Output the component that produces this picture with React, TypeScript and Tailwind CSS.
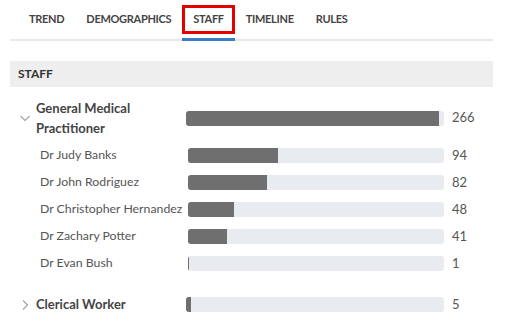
import React from 'react';

const TABS = ['TREND', 'DEMOGRAPHICS', 'STAFF', 'TIMELINE', 'RULES'];

interface Staff {
  name: string;
  count: number;
}

const GMP: Staff[] = [
  { name: 'Dr Judy Banks', count: 94 },
  { name: 'Dr John Rodriguez', count: 82 },
  { name: 'Dr Christopher Hernandez', count: 48 },
  { name: 'Dr Zachary Potter', count: 41 },
  { name: 'Dr Evan Bush', count: 1 },
];

const MAX = 266;

const Bar = ({ value, max, pct }: { value: number; max: number; pct?: number }) => (
  <div className="h-[15px] flex-1 overflow-hidden rounded-[3px] bg-[#e8ebef]">
    <div
      className="h-full bg-[#6f6f6f]"
      style={{ width: `${pct ?? Math.max((value / max) * 100, 0.5)}%` }}
    />
  </div>
);

const Chevron = ({ open }: { open?: boolean }) => (
  <svg width="12" height="12" viewBox="0 0 12 12" className="shrink-0">
    {open ? (
      <path d="M1.5 4 L6 8.5 L10.5 4" fill="none" stroke="#a3a3a3" strokeWidth="1.2" />
    ) : (
      <path d="M4 1.5 L8.5 6 L4 10.5" fill="none" stroke="#a3a3a3" strokeWidth="1.2" />
    )}
  </svg>
);

export default function App() {
  return (
    <div className="h-[328px] w-[506px] bg-white pl-[10px] pr-[13px] font-['Lato','Liberation_Sans',sans-serif] text-[13px]">
      {/* Tabs */}
      <div className="flex h-[41px] border-b-2 border-[#e6e9ed] pl-[8px]">
        {TABS.map(t => (
          <div key={t} className="relative flex items-center px-[11px]">
            <span
              className={`text-[11px] font-bold tracking-[-0.3px] text-[#444] ${
                t === 'STAFF' ? '-mx-[8px] px-[8px] py-[3px] outline-[3px] outline-solid outline-[#e50000]' : ''
              }`}
            >
              {t}
            </span>
            {t === 'STAFF' && <div className="absolute -bottom-[2px] left-0 right-0 h-[3px] bg-[#3b7bc0]" />}
          </div>
        ))}
      </div>

      {/* Section */}
      <div className="mt-[20px] flex h-[26px] items-center bg-[#eeeeee] px-[8px] text-[12px] font-bold text-[#333]">
        STAFF
      </div>

      <div className="pt-[11px]">
        <div className="flex items-center">
          <div className="flex w-[176px] items-center gap-[5px] pl-[9px]">
            <Chevron open />
            <div className="w-[132px] font-bold leading-[20px] text-[#444]">General Medical Practitioner</div>
          </div>
          <Bar value={266} max={MAX} pct={98} />
          <div className="w-[49px] pl-[8px] text-[#555]">266</div>
        </div>

        <div className="mt-[4px]">
          {GMP.map(s => (
            <div key={s.name} className="flex h-[27px] items-center">
              <div className="w-[178px] whitespace-nowrap pl-[30px] text-[12.3px] text-[#555]">{s.name}</div>
              <Bar value={s.count} max={MAX} />
              <div className="w-[49px] pl-[8px] text-[#555]">{s.count}</div>
            </div>
          ))}
        </div>

        <div className="mt-[14px] flex h-[27px] items-center">
          <div className="flex w-[176px] items-center gap-[5px] pl-[9px]">
            <Chevron />
            <div className="font-bold text-[#444]">Clerical Worker</div>
          </div>
          <Bar value={5} max={MAX} />
          <div className="w-[49px] pl-[8px] text-[#555]">5</div>
        </div>
      </div>
    </div>
  );
}
